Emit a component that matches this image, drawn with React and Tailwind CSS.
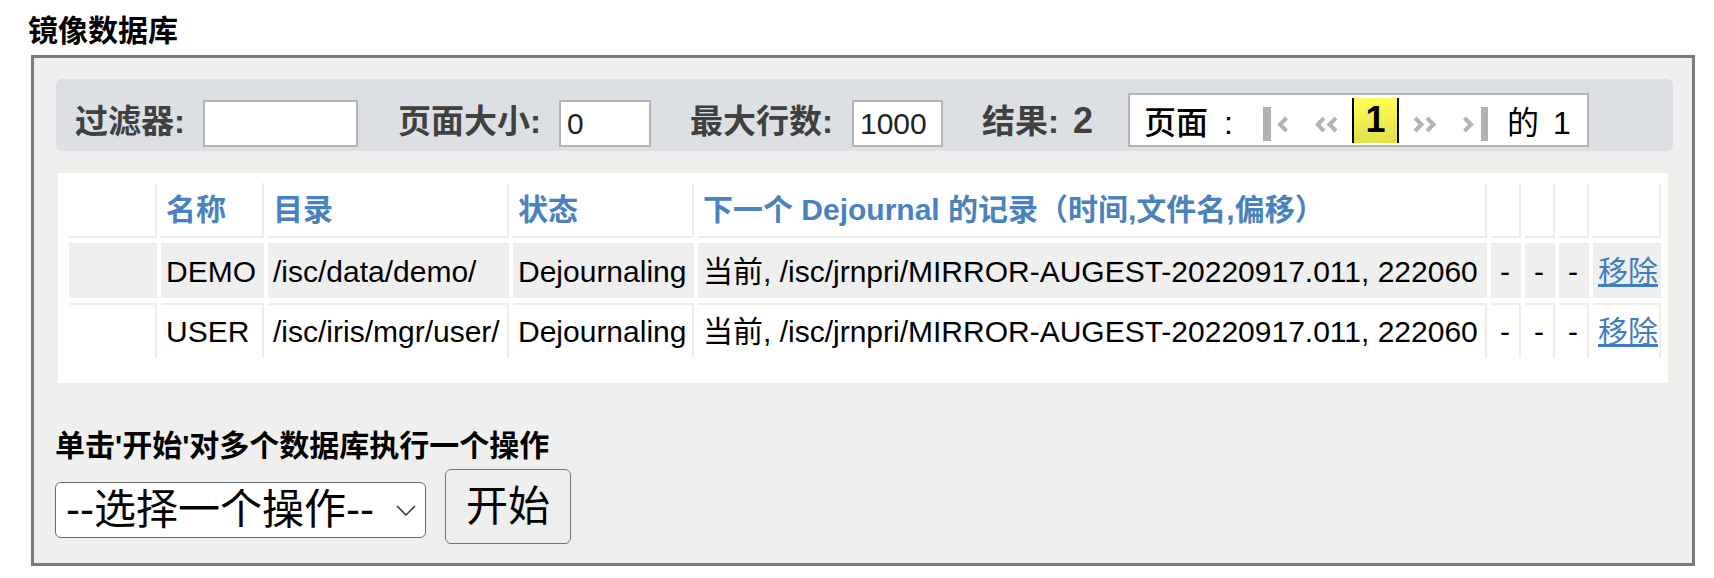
const widths = ["w-[88px]", "w-[103px]", "w-[241px]", "w-[181px]", "w-[789px]", "w-[30px]", "w-[30px]", "w-[30px]", "w-[68px]"];

const headers = ["", "名称", "目录", "状态", "下一个 Dejournal 的记录（时间,文件名,偏移）", "", "", "", ""];

const rows = [
	{ name: "DEMO", dir: "/isc/data/demo/", state: "Dejournaling", next: "当前, /isc/jrnpri/MIRROR-AUGEST-20220917.011, 222060" },
	{ name: "USER", dir: "/isc/iris/mgr/user/", state: "Dejournaling", next: "当前, /isc/jrnpri/MIRROR-AUGEST-20220917.011, 222060" },
];

function FilterLabel({ children, className }) {
	return (
		<span className={"flex h-[47px] items-center pb-[5px] text-[33px] font-bold leading-none text-[#404040] whitespace-nowrap " + className}>
			{children}
		</span>
	);
}

function Pager() {
	return (
		<div className="flex h-[54px] w-[461px] items-center border-2 border-[#b4b4b4] bg-white pl-[14px]">
			<span className="mt-[6px] text-[32px] font-medium leading-none whitespace-nowrap">
				页面<span className="ml-[16px]">:</span>
			</span>
			{/* first */}
			<svg className="ml-[30px] mt-[8px]" width="26" height="34" viewBox="0 0 26 34">
				<rect x="0" y="0" width="8" height="34" fill="#b3b3b3" />
				<polyline points="23.5,11 17,17.5 23.5,24" fill="none" stroke="#b3b3b3" strokeWidth="4" />
			</svg>
			{/* prev */}
			<svg className="ml-[26px] mt-[8px]" width="23" height="34" viewBox="0 0 23 34">
				<polyline points="9,11 2.5,17.5 9,24" fill="none" stroke="#b3b3b3" strokeWidth="4" />
				<polyline points="21,11 14.5,17.5 21,24" fill="none" stroke="#b3b3b3" strokeWidth="4" />
			</svg>
			<span className="ml-[14px] flex h-[45px] w-[47px] items-center justify-center border-x-2 border-black bg-linear-to-b from-[#ffff58] to-[#e0e048] text-[36px] font-bold leading-none">
				1
			</span>
			{/* next */}
			<svg className="ml-[14px] mt-[8px]" width="23" height="34" viewBox="0 0 23 34">
				<polyline points="2,11 8.5,17.5 2,24" fill="none" stroke="#b3b3b3" strokeWidth="4" />
				<polyline points="14,11 20.5,17.5 14,24" fill="none" stroke="#b3b3b3" strokeWidth="4" />
			</svg>
			{/* last */}
			<svg className="ml-[27px] mt-[8px]" width="25" height="34" viewBox="0 0 25 34">
				<polyline points="1.5,11 8,17.5 1.5,24" fill="none" stroke="#b3b3b3" strokeWidth="4" />
				<rect x="18" y="0" width="7" height="34" fill="#b3b3b3" />
			</svg>
			<span className="ml-[19px] mt-[6px] text-[32px] leading-none whitespace-nowrap">
				的<span className="ml-[14px]">1</span>
			</span>
		</div>
	);
}

function FilterBar() {
	return (
		<div className="ml-[3px] flex h-[72px] items-end rounded-md bg-[#dcdfe3] pb-[4px] pl-[19px]">
			<FilterLabel className="w-[128px]">过滤器:</FilterLabel>
			<input readOnly value="" className="h-[47px] w-[155px] border-2 border-[#b4b4b4] bg-white pl-[6px] text-[30px] text-[#222] outline-none" />
			<FilterLabel className="ml-[40px] w-[161px]">页面大小:</FilterLabel>
			<input readOnly value="0" className="h-[47px] w-[92px] border-2 border-[#b4b4b4] bg-white pl-[6px] text-[30px] text-[#222] outline-none" />
			<FilterLabel className="ml-[39px] w-[162px]">最大行数:</FilterLabel>
			<input readOnly value="1000" className="h-[47px] w-[91px] border-2 border-[#b4b4b4] bg-white pl-[6px] text-[30px] text-[#222] outline-none" />
			<FilterLabel className="ml-[39px] w-[146px]">
				结果:<span className="ml-[14px] text-[36px]">2</span>
			</FilterLabel>
			<Pager />
		</div>
	);
}

function MirrorTable() {
	return (
		<div className="mt-[17px] border-[5px] border-[#f0efe7] bg-white pb-[20px] pl-[7px] pt-[5px]">
			<table className="w-[1600px] table-fixed border-separate border-spacing-x-[4px] border-spacing-y-[5px]">
				<thead>
					<tr>
						{headers.map((h, i) => (
							<th key={i} className={"h-[55px] border-b-2 border-r-2 border-[#eeeee4] px-[5px] text-left align-middle text-[30px] font-bold whitespace-nowrap text-[#4a82bf] " + widths[i]}>
								{h}
							</th>
						))}
					</tr>
				</thead>
				<tbody>
					{rows.map((r, idx) => {
						const bg = idx == 0 ? "bg-[#efefef]" : "bg-white";
						const cell = "h-[55px] border-t-2 border-r-2 border-[#eeeee4] px-[5px] align-middle text-[30px] whitespace-nowrap " + bg;
						return (
							<tr key={r.name}>
								<td className={cell}></td>
								<td className={cell}>{r.name}</td>
								<td className={cell}>{r.dir}</td>
								<td className={cell}>{r.state}</td>
								<td className={cell}>{r.next}</td>
								<td className={cell + " text-center"}>-</td>
								<td className={cell + " text-center"}>-</td>
								<td className={cell + " text-center"}>-</td>
								<td className={cell}>
									<a href="#" className="text-[#3d7cc0] underline">移除</a>
								</td>
							</tr>
						);
					})}
				</tbody>
			</table>
		</div>
	);
}

function Actions() {
	return (
		<div className="ml-[2px] mt-[40px]">
			<p className="text-[30px] font-bold leading-[36px]">单击'开始'对多个数据库执行一个操作</p>
			<div className="mt-[5px] flex items-start gap-[19px]">
				<div className="mt-[13px] flex h-[56px] w-[371px] items-center rounded-[6px] border-[1.5px] border-[#6b6b6b] bg-white pl-[10px] pr-[9px]">
					<select className="min-w-0 flex-1 appearance-none bg-transparent text-[42px] leading-none outline-none">
						<option>--选择一个操作--</option>
					</select>
					<svg width="20" height="11" viewBox="0 0 20 11">
						<polyline points="1,1 10,10 19,1" fill="none" stroke="#333" strokeWidth="1.5" />
					</svg>
				</div>
				<button className="h-[75px] w-[126px] rounded-[6px] border-[1.5px] border-[#777] bg-[#efefef] text-[42px] leading-none">
					开始
				</button>
			</div>
		</div>
	);
}

export default function App() {
	return (
		<div className="min-h-screen bg-white font-['Liberation_Sans','Noto_Sans_CJK_SC',sans-serif] text-black">
			<h2 className="pl-[28px] pt-[14px] text-[30px] font-bold leading-[34px]">镜像数据库</h2>
			<div className="ml-[31px] mt-[7px] w-[1664px] border-[3px] border-[#7b7b7b] bg-[#efefef] pb-[19px] pl-[19px] pr-[19px] pt-[21px]">
				<FilterBar />
				<MirrorTable />
				<Actions />
			</div>
		</div>
	);
}
